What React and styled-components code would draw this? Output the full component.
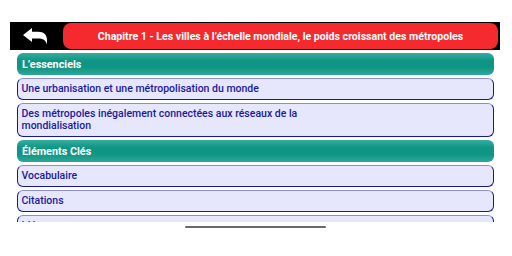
import React from "react";
import styled, { createGlobalStyle } from "styled-components";

const Global = createGlobalStyle`
  html, body { margin: 0; padding: 0; background: #ffffff; }
  body { font-family: Roboto, "Liberation Sans", sans-serif; width: 512px; height: 256px; overflow: hidden; }
`;

const Page = styled.div`
  width: 512px;
  height: 256px;
  display: flex;
  flex-direction: column;
  padding-top: 22px;
  box-sizing: border-box;
`;

const Header = styled.div`
  margin-left: 10px;
  width: 490px;
  height: 28px;
  background: #000;
  display: flex;
  align-items: flex-start;
  padding-top: 1px;
  box-sizing: border-box;
`;

const BackButton = styled.div`
  width: 53px;
  height: 26px;
  display: flex;
  align-items: center;
  justify-content: center;
  padding-right: 4px;
  box-sizing: border-box;
`;

const Title = styled.div`
  flex: 1;
  height: 26px;
  margin-right: 2px;
  background: #f52a2e;
  border-radius: 8px;
  color: #fff;
  font-weight: 700;
  font-size: 10.6px;
  display: flex;
  align-items: center;
  justify-content: center;
  white-space: nowrap;
`;

const List = styled.div`
  margin: 3px 0 0 17px;
  width: 477px;
  height: 169px;
  overflow: hidden;
  display: flex;
  flex-direction: column;
  gap: 3px;
`;

const Section = styled.div`
  flex: none;
  height: 22px;
  border-radius: 6px;
  background: linear-gradient(to bottom, #36ad9f 0%, #0f9584 35%, #0f9584 65%, #2fa797 100%);
  color: #fff;
  font-weight: 700;
  font-size: 10.8px;
  display: flex;
  align-items: center;
  padding-left: 5px;
  box-sizing: border-box;
`;

const Item = styled.div`
  flex: none;
  min-height: ${(p) => (p.$tall ? "34px" : "22px")};
  border-radius: 6px;
  background: #e6e7fc;
  border: 1.5px solid #1616a4;
  border-top-color: #8c90c8;
  color: #1a1a9c;
  font-weight: 500;
  font-size: 10.5px;
  line-height: 12px;
  display: flex;
  align-items: center;
  padding: 2px 3.5px;
  box-sizing: border-box;
`;

const ItemText = styled.span`
  max-width: 300px;
`;

const HomeBar = styled.div`
  margin: 4px 0 0 185px;
  width: 141px;
  height: 2px;
  background: #6a6a6a;
  border-radius: 1px;
`;

function BackArrow() {
  return (
    <svg width="24" height="17" viewBox="0 0 24 17">
      <path
        d="M0 7 L9 0 L9 3.8 L15 3.8 C21 3.8 24 7 24 12.5 L24 16.5 C22.8 12 20 10.4 15 10.4 L9 10.4 L9 14 Z"
        fill="#fff"
      />
    </svg>
  );
}

export default function App() {
  return (
    <>
      <Global />
      <Page>
        <Header>
          <BackButton>
            <BackArrow />
          </BackButton>
          <Title>Chapitre 1 - Les villes à l’échelle mondiale, le poids croissant des métropoles</Title>
        </Header>
        <List>
          <Section>L’essenciels</Section>
          <Item>Une urbanisation et une métropolisation du monde</Item>
          <Item $tall>
            <ItemText>Des métropoles inégalement connectées aux réseaux de la mondialisation</ItemText>
          </Item>
          <Section>Éléments Clés</Section>
          <Item>Vocabulaire</Item>
          <Item>Citations</Item>
          <Item>Idées</Item>
        </List>
        <HomeBar />
      </Page>
    </>
  );
}
